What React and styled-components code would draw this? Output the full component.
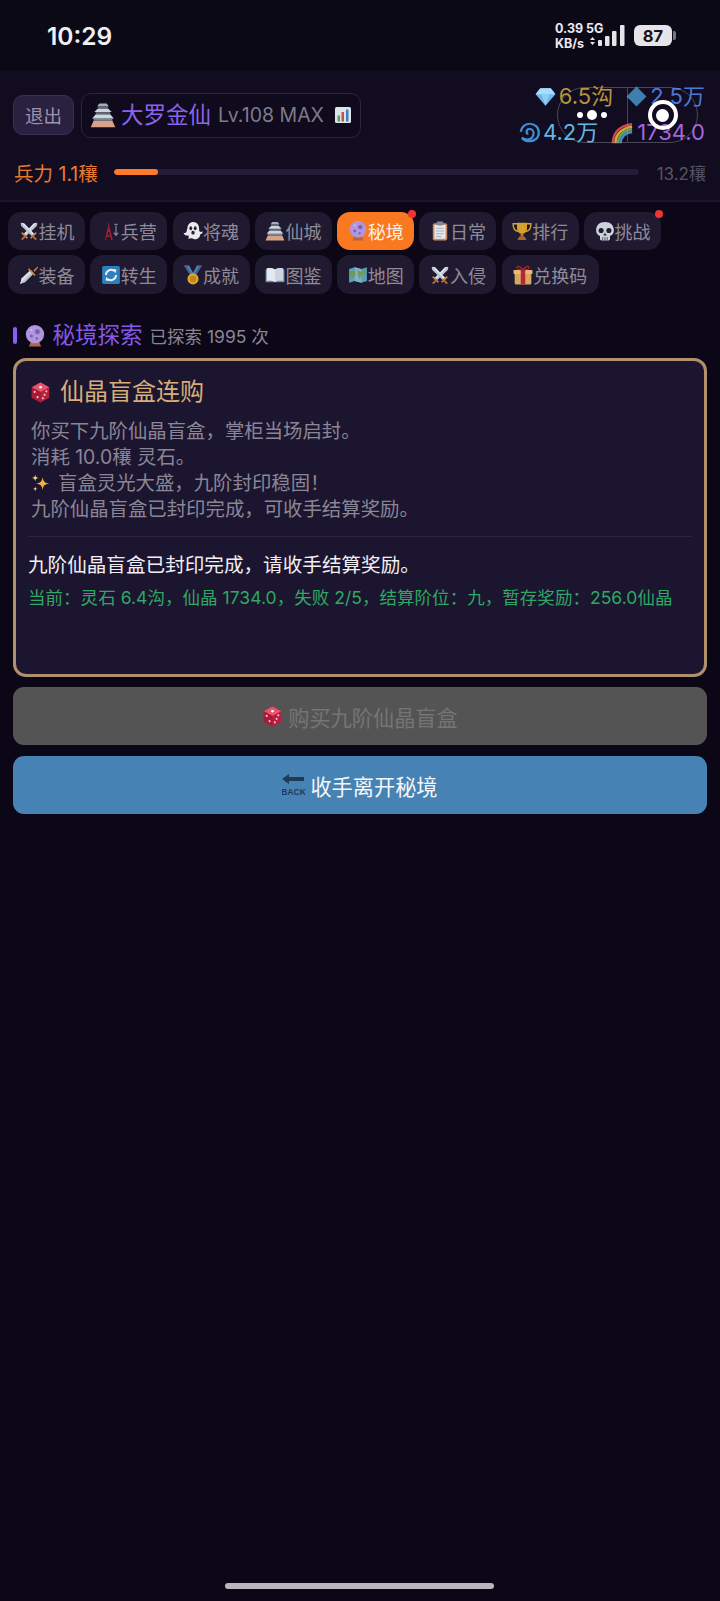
import React from "react";
import styled, { createGlobalStyle } from "styled-components";

const Global = createGlobalStyle`
  html, body { margin: 0; padding: 0; background: #0b0717; }
  * { box-sizing: border-box; }
  body { font-family: Inter, "Noto Sans CJK SC", "Noto Sans", sans-serif; }
`;

const Page = styled.div`
  position: relative; width: 720px; height: 1601px; overflow: hidden;
  display: flex; flex-direction: column; background: #0b0717;
`;
const StatusBar = styled.div`
  height: 71px; flex: none; display: flex; align-items: flex-start; justify-content: space-between;
  padding: 21px 48px 0 47px; background: #0c0916;
`;
const Clock = styled.div`font-size: 24.5px; font-weight: 600; line-height: 30px; color: #f1eff4;`;
const StatusRight = styled.div`display: flex; align-items: flex-start; padding-top: 0;`;
const NetSpeed = styled.div`
  font-size: 12.5px; font-weight: 700; line-height: 15px; color: #ece9f0; white-space: pre; width: 50px;
`;
const Battery = styled.div`
  position: relative; width: 38px; height: 21px; margin: 4px 0 0 9px; border-radius: 6px; background: #e6e4e8; color: #15121c;
  font-size: 16.5px; font-weight: 700; display: flex; align-items: center; justify-content: center;
  &::after { content: ""; position: absolute; right: -4px; top: 6px; width: 3px; height: 9px; border-radius: 0 2px 2px 0; background: #77747d; }
`;
const Header = styled.div`
  height: 131px; flex: none; padding: 15px 13px 0; background: #110c20; border-bottom: 2px solid #1b1530;
  display: flex; flex-direction: column;
`;
const TopRow = styled.div`display: flex; align-items: center; height: 58px; justify-content: space-between;`;
const Left = styled.div`display: flex; align-items: center; gap: 7px;`;
const Logout = styled.div`
  width: 61px; height: 40px; border-radius: 10px; background: #2a2140; border: 1px solid #3a2f55;
  color: #9c92ad; font-size: 18.5px; display: flex; align-items: center; justify-content: center;
`;
const TitleChip = styled.div`
  height: 45px; width: 280px; border-radius: 10px; background: #0f0a1c; border: 1px solid #2c2442;
  display: flex; align-items: center; padding-left: 8px; gap: 5px; white-space: nowrap;
`;
const Rank = styled.span`font-size: 22.5px; color: #8d63ee; line-height: 1;`;
const Level = styled.span`font-size: 19.5px; color: #7e7a8a; margin-left: 2px; margin-right: 5px;`;
const Resources = styled.div`display: flex; flex-direction: column; align-items: flex-end; gap: 6px; margin: -2px 2px 0 0;`;
const ResRow = styled.div`display: flex; align-items: center; gap: 13px; height: 30px;`;
const Res = styled.span`
  display: inline-flex; align-items: center; gap: 3px; font-size: 22px; line-height: 1; color: ${p => p.$c};
`;
const PowerRow = styled.div`display: flex; align-items: center; margin-top: 13px; height: 30px;`;
const PowerLabel = styled.span`font-size: 19.5px; color: #e87a30; width: 101px; padding-left: 1px; white-space: nowrap;`;
const Track = styled.div`width: 525px; height: 6px; border-radius: 3px; background: #251d38; overflow: hidden;`;
const Fill = styled.div`height: 100%; border-radius: 3px; background: #ff7b2c;`;
const PowerMax = styled.span`font-size: 17px; color: #575362; margin: 0 1px 0 auto; white-space: nowrap;`;

const Capsule = styled.div`
  position: absolute; left: 557px; top: 87px; width: 141px; height: 56px; border-radius: 28px;
  border: 1.5px solid rgba(150,150,160,.42); display: flex;
`;
const CapHalf = styled.div`flex: 1; display: flex; align-items: center; justify-content: center; gap: 4px;`;
const CapDivider = styled.div`width: 1.5px; background: rgba(150,150,160,.42);`;
const Dot = styled.i`display: block; width: ${p => p.$s}px; height: ${p => p.$s}px; border-radius: 50%; background: #fff;`;
const Ring = styled.div`
  width: 30px; height: 30px; border-radius: 50%; border: 4px solid #fff;
  display: flex; align-items: center; justify-content: center;
`;

const Nav = styled.div`display: flex; flex-wrap: wrap; gap: 5px 5.3px; padding: 10px 8px 0; width: 680px;`;
const Pill = styled.div`
  position: relative; height: ${p => p.$h}px; padding: 0 9px; border-radius: 13px;
  display: inline-flex; align-items: center; justify-content: center; gap: 0;
  width: ${p => p.$w || 77}px; font-size: 18px; white-space: nowrap;
  background: ${p => p.$on ? "#fa7820" : "#201a30"};
  color: ${p => p.$on ? "#fdf3ea" : "#8f8b99"};
  ${p => p.$dot && `&::after { content: ""; position: absolute; right: -2px; top: -2px; width: 8px; height: 8px; border-radius: 50%; background: #f13238; }`}
`;
const Section = styled.div`display: flex; align-items: center; padding: 19px 13px 0; height: 64px;`;
const SecBar = styled.i`display: block; width: 3.5px; height: 17px; border-radius: 2px; background: #8b5cf6; margin: 0 7px 0 0;`;
const SecTitle = styled.span`font-size: 22.5px; color: #8559e6; margin: 0 7px; line-height: 1;`;
const SecSub = styled.span`font-size: 17.5px; color: #8a8694;`;

const Card = styled.div`
  margin: 0 13px; height: 319px; border: 3px solid #b1906c; border-radius: 13px; background: #1c1530;
  padding: 16px 12px 0;
`;
const CardTitle = styled.div`
  display: flex; align-items: center; gap: 9px; padding-left: 2px; height: 30px;
  font-size: 24px; color: #d6ae78; line-height: 1;
`;
const Log = styled.div`font-size: 19.4px; line-height: 26px; color: #8a8695; padding: 11px 0 14px 3px;`;
const LogLine = styled.div`display: flex; align-items: center; gap: 8px; white-space: nowrap; height: 26px;`;
const Divider = styled.div`height: 1px; background: #2d2541;`;
const Message = styled.div`font-size: 19.6px; color: #f1eff4; line-height: 26px; margin-top: 15px;`;
const Stats = styled.div`font-size: 17.5px; color: #2ea862; line-height: 24px; margin-top: 8px; white-space: nowrap; letter-spacing: .04px;`;

const Actions = styled.div`display: flex; flex-direction: column; gap: 11px; padding: 10px 13px 0;`;
const Btn = styled.div`
  height: 58px; border-radius: 11px; display: flex; align-items: center; justify-content: center; gap: 5px;
  font-size: 21.2px; background: ${p => p.$bg}; color: ${p => p.$c};
`;
const HomeBar = styled.div`
  width: 269px; height: 6px; border-radius: 3px; background: #b9b6bf; margin: auto 0 12px 225px;
`;
const Svg = styled.svg`flex: none; display: block;`;
const SignalIcon = styled(Svg)`margin: 4px 0 0 -18px;`;

const Sword = ({ flip }) => (
  <g transform={flip ? "translate(36,0) scale(-1,1)" : undefined}>
    <path d="M32 3l1 1-1 5L13 27l-4-4L27 4z" fill="#b9c4d2" />
    <path d="M31 4L11 25l-2-2L27 4z" fill="#dfe5ec" />
    <path d="M6 20l10 10-2 2-10-10z" fill="#d98e3e" />
    <path d="M10 26l-6 6 1 2 2 0 6-6z" fill="#a9683a" />
  </g>
);
const Icons = {
  swords: <><Sword /><Sword flip /></>,
  tower: <><path d="M7 34L12 12h1V4h2v8h1l5 22h-3l-1-5h-7l-1 5zM12 26h4l-1-6h-2z" fill="#9c2030" /><path d="M27 8v16M23 21l4 5 4-5" stroke="#8f8b99" strokeWidth="2" fill="none" /><path d="M24 6h6" stroke="#8f8b99" strokeWidth="2" /></>,
  ghost: <><path d="M18 2c7 0 11 5 11 12 0 2 0 4 1 5 2 1 4 1 5-1 1 3-1 6-4 6 0 5-4 9-9 9-3 0-4-2-7-2-2 0-4 1-6 1 1-2 2-3 1-6-4 1-8-1-9-5 2 1 4 1 5-1 1-2 1-5 2-8 1-6 5-10 10-10z" fill="#e9e9ee" /><ellipse cx="14" cy="13" rx="2.5" ry="3.5" fill="#272235" /><ellipse cx="22" cy="13" rx="2.5" ry="3.5" fill="#272235" /><ellipse cx="18" cy="21" rx="3" ry="3.5" fill="#272235" /></>,
  castle: <><path d="M1 35l4-9h26l4 9z" fill="#d9a286" /><path d="M5 26h26v-3H5z" fill="#7d8793" /><path d="M3 23l5-6h20l5 6z" fill="#cdd5dd" /><path d="M8 17h20v-3H8z" fill="#626c78" /><path d="M6 14l5-5h14l5 5z" fill="#cdd5dd" /><path d="M11 9h14V6H11z" fill="#626c78" /><path d="M10 6l3-4h10l3 4z" fill="#a5afba" /></>,
  ball: <><path d="M8 35l3-7h14l3 7z" fill="#b5653f" /><circle cx="18" cy="15" r="15" fill="#b196dd" /><circle cx="22" cy="11" r="4" fill="#7b5fb0" /><circle cx="12" cy="18" r="2.500" fill="#7b5fb0" /><circle cx="21" cy="22" r="2" fill="#7b5fb0" /><circle cx="12" cy="8" r="1.600" fill="#d8c8f0" /></>,
  clip: <><rect x="5" y="4" width="26" height="31" rx="3" fill="#c98a5e" /><rect x="8" y="7" width="20" height="25" fill="#e6e8ee" /><rect x="12" y="1" width="12" height="7" rx="2" fill="#7d8996" /><path d="M11 13h14M11 18h14M11 23h14M11 28h10" stroke="#a4adb8" strokeWidth="1.8" /></>,
  trophy: <><path d="M9 3h18v10c0 6-4 10-9 10S9 19 9 13z" fill="#d6a02c" /><path d="M9 5H2c0 8 3 13 9 14M27 5h7c0 8-3 13-9 14" stroke="#d6a02c" strokeWidth="2.6" fill="none" /><rect x="15.5" y="22" width="5" height="6" fill="#b9822a" /><path d="M10 34l3-6h10l3 6z" fill="#a9672f" /></>,
  skull: <><path d="M18 2C8 2 2 8 2 17c0 5 3 9 7 10v5c0 2 1 3 3 3h12c2 0 3-1 3-3v-5c4-1 7-5 7-10C34 8 28 2 18 2z" fill="#ccd2da" /><circle cx="11" cy="17" r="4.6" fill="#221c30" /><circle cx="25" cy="17" r="4.6" fill="#221c30" /><path d="M18 21l-3 5h6z" fill="#221c30" /><path d="M14 29v6M18 29v6M22 29v6" stroke="#221c30" strokeWidth="1.2" /></>,
  dagger: <><path d="M2 34l3-10L21 9l6 6-16 16z" fill="#b8c3cf" /><path d="M2 34l3-10L21 9l3 3z" fill="#d9e0e7" /><path d="M18 6l12 12-2 2L16 8z" fill="#c98a3e" /><path d="M26 10l7-7 1 0 0 2-6 7z" fill="#d98e3e" /></>,
  cycle: <><rect x="2" y="2" width="32" height="32" rx="3" fill="#2f7fbd" /><path d="M9 18a9 9 0 0 1 15-7" stroke="#eaf2f8" strokeWidth="3.4" fill="none" /><path d="M27 18a9 9 0 0 1-15 7" stroke="#eaf2f8" strokeWidth="3.4" fill="none" /><path d="M21 7l7 1-2 7zM15 29l-7-1 2-7z" fill="#eaf2f8" /></>,
  medal: <><path d="M2 1h9l7 13 7-13h9L22 20h-8z" fill="#4f7fb0" /><path d="M14 20L2 1h4l12 19zM22 20L34 1h-4L18 20z" fill="#3d6690" /><circle cx="18" cy="25" r="10" fill="#e0a62f" /><circle cx="18" cy="25" r="6" fill="#c2851f" /></>,
  book: <><path d="M1 8h34v23H1z" fill="#6d8aa6" /><path d="M3 6c5-1 11-1 15 2v23c-4-3-10-3-15-2z" fill="#e3e9f0" /><path d="M33 6c-5-1-11-1-15 2v23c4-3 10-3 15-2z" fill="#cdd6df" /></>,
  map: <><path d="M2 7l10-3 12 3 10-3v25l-10 3-12-3-10 3z" fill="#5aa0b8" /><path d="M12 4l12 3v25l-12-3z" fill="#7cb3bf" /><path d="M4 12l7-2 3 6-4 6-6 1zM17 10l6 2 8-4v8l-7 2-3 8-3-8z" fill="#6f9a5a" /></>,
  gift: <><rect x="3" y="15" width="30" height="20" rx="2" fill="#d9a75f" /><rect x="1" y="9" width="34" height="7" rx="1" fill="#e7bb75" /><rect x="14" y="9" width="8" height="26" fill="#b5283a" /><path d="M18 9C14 2 8 1 7 4c-1 3 4 5 11 5zM18 9c4-7 10-8 11-5 1 3-4 5-11 5z" stroke="#a52234" strokeWidth="2.4" fill="none" /></>,
  dice: <><path d="M18 1l15 8v18l-15 8-15-8V9z" fill="#b81f3c" /><path d="M18 1l15 8-15 8-15-8z" fill="#e8546d" /><path d="M18 17v18L3 27V9z" fill="#a91a35" /><ellipse cx="18" cy="9" rx="2.6" ry="2" fill="#fff" /><circle cx="8" cy="17" r="1.8" fill="#f2c7cf" /><circle cx="13" cy="26" r="1.8" fill="#f2c7cf" /><circle cx="28" cy="16" r="1.8" fill="#f2c7cf" /><circle cx="25" cy="22" r="1.8" fill="#f2c7cf" /><circle cx="22" cy="28" r="1.8" fill="#f2c7cf" /></>,
  sparkle: <><path d="M22 5c1 9 4 12 13 13-9 1-12 4-13 13-1-9-4-12-13-13 9-1 12-4 13-13z" fill="#eeb23c" /><path d="M8 1c.5 4.500 2 6 6.500 6.500C10 8 8.500 9.500 8 14c-.5-4.500-2-6-6.500-6.500C6 7 7.500 5.500 8 1z" fill="#f5cf73" /><path d="M8 23c.4 3.500 1.600 4.700 5 5-3.400.4-4.600 1.600-5 5-.4-3.400-1.600-4.600-5-5 3.400-.3 4.600-1.500 5-5z" fill="#f5cf73" /></>,
  gem: <><path d="M9 4h18l8 10-17 20L1 14z" fill="#6cb8ec" /><path d="M1 14h34L27 4H9z" fill="#a9dcf8" /><path d="M11 14h14l-7 20z" fill="#8fcdf4" /></>,
  rhomb: <path d="M18 1l17 17-17 17L1 18z" fill="#3f7fb0" />,
  cyclone: <><path d="M18 3c9 0 16 6 16 15 0 9-7 15-16 15-5 0-10-2-13-6 3 2 6 3 9 3 6 0 11-4 11-11 0-4-3-7-7-7-3 0-5 2-5 5 0 2 1 3 3 3" stroke="#3f8fd6" strokeWidth="3.8" fill="none" /><path d="M3 17C4 9 10 3 18 3" stroke="#3f8fd6" strokeWidth="3.8" fill="none" /></>,
  rainbow: <><path d="M3 35C3 18 14 7 33 5" stroke="#c94a4a" strokeWidth="4" fill="none" /><path d="M7 35C7 21 17 11 33 9" stroke="#dba13b" strokeWidth="4" fill="none" /><path d="M11 35C11 24 19 15 33 13" stroke="#5ea850" strokeWidth="4" fill="none" /><path d="M15 35c0-9 7-17 18-18" stroke="#4a86c8" strokeWidth="4" fill="none" /></>,
  chart: <><rect x="2" y="2" width="32" height="32" rx="3" fill="#dfe4ea" /><rect x="7" y="19" width="5" height="12" fill="#5aa35a" /><rect x="15" y="12" width="5" height="19" fill="#c9504a" /><rect x="24" y="7" width="5" height="24" fill="#3f7fc0" /></>,
};
const Icon = ({ n, s = 20 }) => <Svg width={s} height={s} viewBox="0 0 36 36">{Icons[n]}</Svg>;

const BackIcon = () => (
  <Svg width="23" height="24" viewBox="0 0 23 24">
    <path d="M0 6l7-5v3h15v4H7v3z" fill="#1f3b55" />
    <text x="11.500" y="22" textAnchor="middle" fontSize="8.500" fontWeight="700" fontFamily="Liberation Sans, sans-serif" fill="#1f3b55">BACK</text>
  </Svg>
);
const Signal = () => (
  <SignalIcon width="38" height="21" viewBox="0 0 38 21">
    <path d="M3 15l2.500-3L8 15zM3 17l2.500 3L8 17z" fill="#e6e4e8" />
    <rect x="11" y="15" width="4" height="6" rx="1" fill="#e6e4e8" />
    <rect x="18" y="11" width="4.500" height="10" rx="1" fill="#e6e4e8" />
    <rect x="25" y="6" width="4.500" height="15" rx="1" fill="#e6e4e8" />
    <rect x="33" y="0" width="4.500" height="21" rx="1" fill="#e6e4e8" />
  </SignalIcon>
);

const navItems = [
  { n: "swords", t: "挂机" }, { n: "tower", t: "兵营" }, { n: "ghost", t: "将魂" }, { n: "castle", t: "仙城" },
  { n: "ball", t: "秘境", on: true, dot: true }, { n: "clip", t: "日常" }, { n: "trophy", t: "排行" }, { n: "skull", t: "挑战", dot: true },
  { n: "dagger", t: "装备" }, { n: "cycle", t: "转生" }, { n: "medal", t: "成就" }, { n: "book", t: "图鉴" },
  { n: "map", t: "地图" }, { n: "swords", t: "入侵" }, { n: "gift", t: "兑换码", w: 97 },
];

export default function App() {
  return (
    <Page>
      <Global />
      <StatusBar>
        <Clock>10:29</Clock>
        <StatusRight>
          <NetSpeed>{"0.39 5G\nKB/s"}</NetSpeed>
          <Signal />
          <Battery>87</Battery>
        </StatusRight>
      </StatusBar>
      <Header>
        <TopRow>
          <Left>
            <Logout>退出</Logout>
            <TitleChip>
              <Icon n="castle" s={26} />
              <Rank>大罗金仙</Rank>
              <Level>Lv.108 MAX</Level>
              <Icon n="chart" s={18} />
            </TitleChip>
          </Left>
          <Resources>
            <ResRow>
              <Res $c="#b8933a"><Icon n="gem" s={21} />6.5沟</Res>
              <Res $c="#4a78d6"><Icon n="rhomb" s={21} />2.5万</Res>
            </ResRow>
            <ResRow>
              <Res $c="#62b6e6"><Icon n="cyclone" s={21} />4.2万</Res>
              <Res $c="#a665dc"><Icon n="rainbow" s={23} />1734.0</Res>
            </ResRow>
          </Resources>
        </TopRow>
        <PowerRow>
          <PowerLabel>兵力 1.1穰</PowerLabel>
          <Track><Fill style={{ width: `${(1.1 / 13.2) * 100}%` }} /></Track>
          <PowerMax>13.2穰</PowerMax>
        </PowerRow>
      </Header>
      <Capsule>
        <CapHalf><Dot $s={6} /><Dot $s={10} /><Dot $s={6} /></CapHalf>
        <CapDivider />
        <CapHalf><Ring><Dot $s={13} /></Ring></CapHalf>
      </Capsule>
      <Nav>
        {navItems.map((p, i) => (
          <Pill key={i} $on={p.on} $dot={p.dot} $w={p.w} $h={i < 8 ? 38 : 39}>
            <Icon n={p.n} s={20} />{p.t}
          </Pill>
        ))}
      </Nav>
      <Section>
        <SecBar />
        <Icon n="ball" s={22} />
        <SecTitle>秘境探索</SecTitle>
        <SecSub>已探索 1995 次</SecSub>
      </Section>
      <Card>
        <CardTitle><Icon n="dice" s={21} />仙晶盲盒连购</CardTitle>
        <Log>
          <LogLine>你买下九阶仙晶盲盒，掌柜当场启封。</LogLine>
          <LogLine>消耗 10.0穰 灵石。</LogLine>
          <LogLine><Icon n="sparkle" s={19} />盲盒灵光大盛，九阶封印稳固！</LogLine>
          <LogLine>九阶仙晶盲盒已封印完成，可收手结算奖励。</LogLine>
        </Log>
        <Divider />
        <Message>九阶仙晶盲盒已封印完成，请收手结算奖励。</Message>
        <Stats>当前：灵石 6.4沟，仙晶 1734.0，失败 2/5，结算阶位：九，暂存奖励：256.0仙晶</Stats>
      </Card>
      <Actions>
        <Btn $bg="#545454" $c="#757575"><Icon n="dice" s={21} />购买九阶仙晶盲盒</Btn>
        <Btn $bg="#4682b4" $c="#f4f6f8"><BackIcon />收手离开秘境</Btn>
      </Actions>
      <HomeBar />
    </Page>
  );
}
